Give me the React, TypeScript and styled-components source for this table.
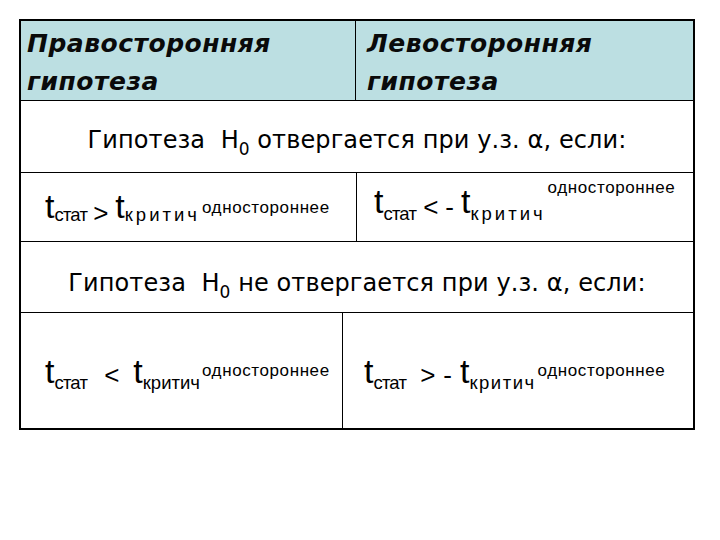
import React from "react";
import styled, { createGlobalStyle } from "styled-components";

const Global = createGlobalStyle`
  html, body { margin: 0; padding: 0; background: #ffffff; }
  body { font-family: "Liberation Sans", Arial, sans-serif; color: #000; }
`;

const Page = styled.div`
  width: 720px;
  height: 540px;
  padding: 19px 0 0 19px;
  box-sizing: border-box;
`;

const Table = styled.div`
  width: 676px;
  border: 2px solid #000;
  box-sizing: border-box;
  display: flex;
  flex-direction: column;
`;

const Row = styled.div<{ $h: number; $cols?: string; $bg?: string; $last?: boolean }>`
  height: ${(p) => p.$h}px;
  display: grid;
  grid-template-columns: ${(p) => p.$cols || "1fr"};
  background: ${(p) => p.$bg || "#fff"};
  border-bottom: ${(p) => (p.$last ? "none" : "1px solid #000")};
  box-sizing: content-box;
`;

const HeadCell = styled.div<{ $pl: number; $divider?: boolean }>`
  padding: 4px 0 0 ${(p) => p.$pl}px;
  border-right: ${(p) => (p.$divider ? "1px solid #000" : "none")};
  font-family: "DejaVu Sans", Verdana, sans-serif;
  font-weight: bold;
  font-style: italic;
  font-size: 25px;
  letter-spacing: 0.5px;
  line-height: 38px;
  color: #0a0a0a;
  white-space: nowrap;
`;

const WideCell = styled.div<{ $pt: number }>`
  padding-top: ${(p) => p.$pt}px;
  text-align: center;
  font-family: "DejaVu Sans", Verdana, sans-serif;
  font-size: 24px;
  letter-spacing: 0.1px;
  line-height: 28px;
  white-space: pre;
`;

const Zero = styled.span`
  font-size: 17px;
  vertical-align: -7px;
  line-height: 0;
  letter-spacing: 0;
`;

const FormulaCell = styled.div<{ $pl: number; $pt: number; $divider?: boolean }>`
  padding: ${(p) => p.$pt}px 0 0 ${(p) => p.$pl}px;
  border-right: ${(p) => (p.$divider ? "1px solid #000" : "none")};
`;

const Formula = styled.div`
  font-size: 34px;
  line-height: 34px;
  white-space: nowrap;
`;

const Sub = styled.span<{ $shift: number; $ls: number }>`
  font-size: 18.5px;
  line-height: 0;
  vertical-align: ${(p) => p.$shift}px;
  letter-spacing: ${(p) => p.$ls}px;
`;

const Op = styled.span<{ $shift: number; $l: number; $r: number }>`
  display: inline-block;
  font-size: 26px;
  line-height: 0;
  vertical-align: ${(p) => p.$shift}px;
  margin: 0 ${(p) => p.$r}px 0 ${(p) => p.$l}px;
`;

const Sup = styled.span<{ $lift: number }>`
  font-size: 17px;
  line-height: 0;
  letter-spacing: 0.6px;
  margin-left: 2px;
  vertical-align: ${(p) => p.$lift}px;
`;

type ExprProps = {
  op: string;
  neg?: boolean;
  sub: number;
  lift: number;
  opShift: number;
  crit: number;
  gaps: number[];
};

function Expr({ op, neg, sub, lift, opShift, crit, gaps }: ExprProps) {
  return (
    <Formula>
      t<Sub $shift={sub} $ls={-0.8}>стат</Sub>
      <Op $shift={opShift} $l={gaps[0]} $r={gaps[1]}>
        {op}
      </Op>
      {neg ? (
        <Op $shift={opShift} $l={0} $r={gaps[2]}>
          -
        </Op>
      ) : null}
      t<Sub $shift={sub} $ls={crit}>критич</Sub>
      <Sup $lift={lift}>одностороннее</Sup>
    </Formula>
  );
}

export default function App() {
  return (
    <Page>
      <Global />
      <Table>
        <Row $h={79} $cols="335px 1fr" $bg="#bcdfe2">
          <HeadCell $pl={6} $divider>
            Правосторонняя
            <br />
            гипотеза
          </HeadCell>
          <HeadCell $pl={11}>
            Левосторонняя
            <br />
            гипотеза
          </HeadCell>
        </Row>
        <Row $h={71}>
          <WideCell $pt={25}>
            Гипотеза  H<Zero>0</Zero> отвергается при у.з. α, если:
          </WideCell>
        </Row>
        <Row $h={68} $cols="336px 1fr">
          <FormulaCell $pl={24} $pt={16} $divider>
            <Expr op=">" sub={-3} lift={5} opShift={-4} crit={3} gaps={[6, 7]} />
          </FormulaCell>
          <FormulaCell $pl={17} $pt={11}>
            <Expr op="<" neg sub={-7} lift={20} opShift={-3} crit={3} gaps={[7, 7, 7]} />
          </FormulaCell>
        </Row>
        <Row $h={70}>
          <WideCell $pt={27}>
            Гипотеза  H<Zero>0</Zero> не отвергается при у.з. α, если:
          </WideCell>
        </Row>
        <Row $h={115} $cols="322px 1fr" $last>
          <FormulaCell $pl={24} $pt={41} $divider>
            <Expr op="<" sub={-6} lift={7} opShift={-1} crit={0} gaps={[17, 14]} />
          </FormulaCell>
          <FormulaCell $pl={21} $pt={41}>
            <Expr op=">" neg sub={-6} lift={7} opShift={-1} crit={1.5} gaps={[14, 8, 8]} />
          </FormulaCell>
        </Row>
      </Table>
    </Page>
  );
}
